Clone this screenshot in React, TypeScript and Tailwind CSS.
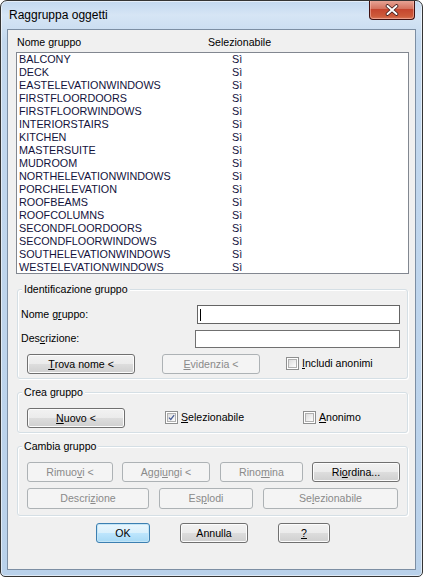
import React from "react";

const rows = [
  "BALCONY",
  "DECK",
  "EASTELEVATIONWINDOWS",
  "FIRSTFLOORDOORS",
  "FIRSTFLOORWINDOWS",
  "INTERIORSTAIRS",
  "KITCHEN",
  "MASTERSUITE",
  "MUDROOM",
  "NORTHELEVATIONWINDOWS",
  "PORCHELEVATION",
  "ROOFBEAMS",
  "ROOFCOLUMNS",
  "SECONDFLOORDOORS",
  "SECONDFLOORWINDOWS",
  "SOUTHELEVATIONWINDOWS",
  "WESTELEVATIONWINDOWS",
];

function M({ t, u }: { t: string; u: number }) {
  return (
    <>
      {t.slice(0, u)}
      <span className="underline underline-offset-[1px]">{t[u]}</span>
      {t.slice(u + 1)}
    </>
  );
}

function Btn({
  w,
  children,
  disabled,
  def,
}: {
  w: string;
  children: React.ReactNode;
  disabled?: boolean;
  def?: boolean;
}) {
  let cls =
    "h-full flex items-center justify-center rounded-[3px] border text-[10.6px] leading-none ";
  if (disabled) {
    cls += "border-[#adb2b5] bg-[#f4f4f4] text-[#8a8a8a]";
  } else if (def) {
    cls +=
      "border-[#3c7fb1] text-black bg-[linear-gradient(#eaf6fd,#d9f0fc_50%,#bee6fd_50%,#a7d9f5)] shadow-[inset_0_0_0_1px_#c4e5f6]";
  } else {
    cls +=
      "border-[#707070] text-black bg-[linear-gradient(#f2f2f2,#ebebeb_50%,#dddddd_50%,#cfcfcf)] shadow-[inset_0_0_0_1px_#fcfcfc]";
  }
  return <div className={`${w} ${cls}`}>{children}</div>;
}

function Check({ checked }: { checked?: boolean }) {
  return (
    <div className="w-[13px] h-[13px] border border-[#8e8f8f] bg-white p-[1px] shrink-0">
      <div className="w-full h-full border border-[#b0b0b0] bg-[linear-gradient(135deg,#dcdcdc,#fefefe)] relative">
        {checked && (
          <svg viewBox="0 0 9 9" className="absolute inset-0 w-full h-full">
            <path d="M1.2 4.6 L3.6 7 L7.9 1.4" fill="none" stroke="#4a5f97" strokeWidth="1.6" />
          </svg>
        )}
      </div>
    </div>
  );
}

function Group({
  label,
  className,
  children,
}: {
  label: string;
  className: string;
  children: React.ReactNode;
}) {
  return (
    <div
      className={`relative ml-[9px] w-[391px] rounded-[3px] border border-[#d5dfe5] shadow-[inset_1px_1px_0_#fff,1px_1px_0_#fff] ${className}`}
    >
      <div className="absolute left-[4px] top-[-8px] bg-[#f0f0f0] px-[2px] text-[10.6px] leading-[14px] text-black">
        {label}
      </div>
      {children}
    </div>
  );
}

export default function App() {
  return (
    <div className="w-[423px] h-[577px] font-['Liberation_Sans',Arial,sans-serif] text-black">
      <div className="w-full h-full flex flex-col rounded-t-[7px] rounded-b-[5px] border border-[#343434] bg-[linear-gradient(180deg,#c2d8ef_0px,#d6e5f5_14px,#c3d8ee_40px,#b9d1ea_100%)] shadow-[inset_0_0_0_1px_rgba(255,255,255,0.55)] overflow-hidden">
        <div className="h-[28px] flex items-start justify-between shrink-0">
          <div className="pl-[8px] pt-[7px] text-[12px] leading-[15px] text-black">
            Raggruppa oggetti
          </div>
          <div className="mr-[7px] -mt-px w-[46px] h-[20px] rounded-b-[4px] border border-[#3f1010] border-t-0 bg-[linear-gradient(#e9a99b,#d5735f_45%,#c5462f_50%,#cd5a3a_85%,#d8785a)] shadow-[inset_0_0_0_1px_rgba(255,200,190,0.5)] flex items-center justify-center">
            <svg viewBox="0 0 14 12" className="w-[14px] h-[12px]">
              <path d="M2.5 2 L11.5 10 M11.5 2 L2.5 10" stroke="#3a1a1a" strokeWidth="3.6" strokeLinecap="round" />
              <path d="M2.5 2 L11.5 10 M11.5 2 L2.5 10" stroke="#ffffff" strokeWidth="2" strokeLinecap="round" />
            </svg>
          </div>
        </div>
        <div className="mx-[6px] mb-[6px] flex-1 border border-[#7c8ea3] bg-[#f0f0f0] flex flex-col">
          <div className="pt-[6px] pl-[9px] h-[19px] flex text-[10.6px] leading-[13px] shrink-0">
            <div className="w-[191px]">
              Nome <M t="gruppo" u={0} />
            </div>
            <div>Selezionabile</div>
          </div>
          <div className="mt-[3px] ml-[8px] w-[393px] h-[222px] border border-[#828790] bg-white pt-[0px] shrink-0">
            {rows.map((r) => (
              <div key={r} className="h-[13px] flex pl-[2px] text-[10.8px] leading-[13px] text-[#12123c]">
                <div className="w-[213px]">{r}</div>
                <div>Sì</div>
              </div>
            ))}
          </div>

          <Group label="Identificazione gruppo" className="mt-[15px] h-[90px]">
            <div className="pt-[15px] flex flex-col">
              <div className="flex items-center h-[19px]">
                <div className="pl-[3px] w-[179px] text-[10.6px]">
                  Nome g<M t="ruppo:" u={0} />
                </div>
                <div className="w-[203px] h-full border border-[#646464] bg-white flex items-center pl-[2px]">
                  <div className="w-px h-[12px] bg-black" />
                </div>
              </div>
              <div className="flex items-center h-[18px] mt-[6px]">
                <div className="pl-[3px] w-[177px] text-[10.6px]">
                  Des<M t="crizione:" u={0} />
                </div>
                <div className="w-[205px] h-full border border-[#707070] bg-white" />
              </div>
              <div className="flex items-center h-[20px] mt-[6px] pl-[9px]">
                <Btn w="w-[108px]">
                  <M t="Trova nome <" u={0} />
                </Btn>
                <div className="ml-[27px] h-full">
                  <Btn w="w-[98px]" disabled>
                    <M t="Evidenzia <" u={0} />
                  </Btn>
                </div>
                <div className="ml-[26px] flex items-center gap-[3px] text-[10.6px]">
                  <Check />
                  <span>
                    <M t="Includi anonimi" u={0} />
                  </span>
                </div>
              </div>
            </div>
          </Group>

          <Group label="Crea gruppo" className="mt-[13px] h-[41px]">
            <div className="pt-[15px] pl-[9px] flex items-center">
              <div className="h-[20px]">
                <Btn w="w-[98px]">
                  <M t="Nuovo <" u={0} />
                </Btn>
              </div>
              <div className="ml-[40px] flex items-center gap-[3px] text-[10.6px] w-[138px]">
                <Check checked />
                <span>
                  <M t="Selezionabile" u={0} />
                </span>
              </div>
              <div className="flex items-center gap-[3px] text-[10.6px]">
                <Check />
                <span>
                  <M t="Anonimo" u={0} />
                </span>
              </div>
            </div>
          </Group>

          <Group label="Cambia gruppo" className="mt-[13px] h-[70px]">
            <div className="pt-[15px] pl-[9px] flex flex-col">
              <div className="flex h-[20px]">
                <Btn w="w-[86px]" disabled>
                  Rimuo<M t="vi <" u={0} />
                </Btn>
                <div className="ml-[9px] h-full">
                  <Btn w="w-[88px]" disabled>
                    Aggi<M t="ungi <" u={0} />
                  </Btn>
                </div>
                <div className="ml-[10px] h-full">
                  <Btn w="w-[83px]" disabled>
                    Rino<M t="mina" u={0} />
                  </Btn>
                </div>
                <div className="ml-[9px] h-full">
                  <Btn w="w-[88px]">
                    Ri<M t="ordina..." u={0} />
                  </Btn>
                </div>
              </div>
              <div className="flex h-[21px] mt-[6px]">
                <Btn w="w-[122px]" disabled>
                  Descri<M t="zione" u={0} />
                </Btn>
                <div className="ml-[10px] h-full">
                  <Btn w="w-[94px]" disabled>
                    Es<M t="plodi" u={0} />
                  </Btn>
                </div>
                <div className="ml-[10px] h-full">
                  <Btn w="w-[135px]" disabled>
                    Se<M t="lezionabile" u={0} />
                  </Btn>
                </div>
              </div>
            </div>
          </Group>

          <div className="mt-[7px] h-[20px] flex pl-[88px]">
            <Btn w="w-[54px]" def>
              OK
            </Btn>
            <div className="ml-[30px] h-full">
              <Btn w="w-[68px]">Annulla</Btn>
            </div>
            <div className="ml-[30px] h-full">
              <Btn w="w-[52px]">
                <M t="?" u={0} />
              </Btn>
            </div>
          </div>
        </div>
      </div>
    </div>
  );
}
